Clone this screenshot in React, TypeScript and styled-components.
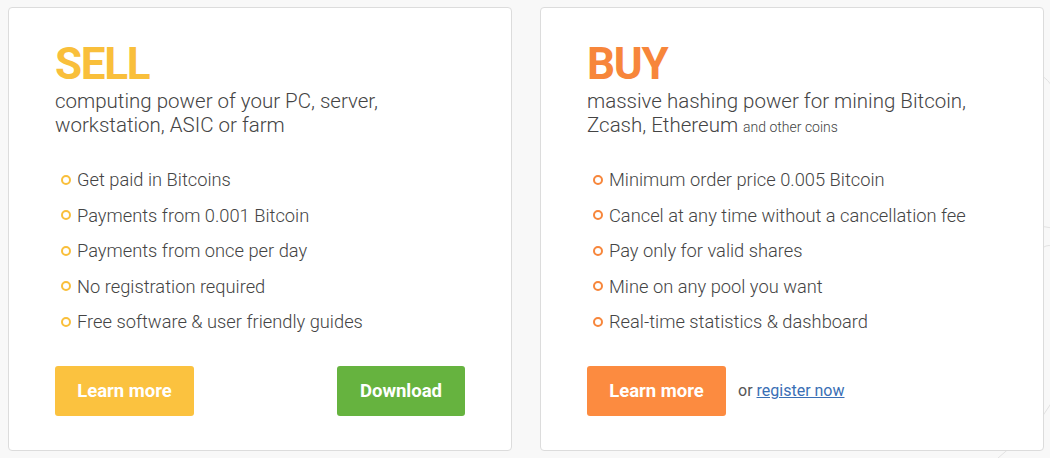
import React from 'react';
import styled, { createGlobalStyle } from 'styled-components';

const GlobalStyle = createGlobalStyle`
  html, body {
    margin: 0;
    padding: 0;
    background: #f8f8f8;
    font-family: Roboto, "Liberation Sans", Arial, sans-serif;
    color: #444;
  }
`;

const Page = styled.div`
  position: relative;
  width: 1050px;
  height: 458px;
  overflow: hidden;
  box-sizing: border-box;
  padding: 7px 0 0 8px;
  display: flex;
  gap: 28px;
`;

// faint network lines behind the cards
const Backdrop = styled.svg`
  position: absolute;
  inset: 0;
  pointer-events: none;
`;

const Card = styled.section`
  position: relative;
  width: 504px;
  height: 444px;
  box-sizing: border-box;
  background: #fff;
  border: 1px solid #dcdcdc;
  border-radius: 4px;
  padding: 34px 46px 0 46px;
  display: flex;
  flex-direction: column;
`;

const Heading = styled.h2<{ $color: string }>`
  margin: 0;
  font-size: 44px;
  line-height: 44px;
  font-weight: 700;
  letter-spacing: -1.3px;
  color: ${(p) => p.$color};
`;

const Lead = styled.p`
  margin: 3px 0 0 0;
  font-size: 20.5px;
  line-height: 24px;
  font-weight: 300;
  color: #444;

  small {
    font-size: 14px;
    line-height: 0;
  }
`;

const Features = styled.ul`
  list-style: none;
  margin: 25px 0 0 0;
  padding: 0;
`;

const Feature = styled.li<{ $color: string }>`
  display: flex;
  align-items: center;
  height: 35.5px;
  font-size: 18.3px;
  font-weight: 300;
  color: #444;

  &::before {
    content: '';
    flex: none;
    width: 6px;
    height: 6px;
    margin: 0 6px 0 6px;
    border: 2.5px solid ${(p) => p.$color};
    border-radius: 50%;
  }
`;

const Actions = styled.div<{ $spread?: boolean }>`
  margin-top: 26px;
  display: flex;
  align-items: center;
  justify-content: ${(p) => (p.$spread ? 'space-between' : 'flex-start')};
`;

const Button = styled.a<{ $bg: string; $width: number }>`
  display: flex;
  align-items: center;
  justify-content: center;
  width: ${(p) => p.$width}px;
  height: 50px;
  box-sizing: border-box;
  border-radius: 3px;
  background: ${(p) => p.$bg};
  color: #fff;
  font-size: 18.5px;
  font-weight: 700;
  text-decoration: none;
  cursor: pointer;
`;

const Alt = styled.span`
  margin-left: 12px;
  font-size: 16px;
  color: #555;

  a {
    color: #3a6fb5;
    text-decoration: underline;
  }
`;

const sellItems = [
  'Get paid in Bitcoins',
  'Payments from 0.001 Bitcoin',
  'Payments from once per day',
  'No registration required',
  'Free software & user friendly guides',
];

const buyItems = [
  'Minimum order price 0.005 Bitcoin',
  'Cancel at any time without a cancellation fee',
  'Pay only for valid shares',
  'Mine on any pool you want',
  'Real-time statistics & dashboard',
];

const YELLOW = '#f9bf3b';
const ORANGE = '#f7863b';

export default function App() {
  return (
    <>
      <GlobalStyle />
      <Page>
        <Backdrop width="1050" height="458" viewBox="0 0 1050 458">
          <g fill="none" stroke="#e2e2e2" strokeWidth="1">
            <path d="M1030 70 Q1044 74 1052 86" />
            <path d="M1040 226 L1052 228" />
            <path d="M1040 250 Q1046 244 1052 246" />
            <path d="M1052 402 L1040 420" />
            <path d="M1012 446 L998 458" />
          </g>
        </Backdrop>

        <Card>
          <Heading $color={YELLOW}>SELL</Heading>
          <Lead>
            computing power of your PC, server,
            <br />
            workstation, ASIC or farm
          </Lead>
          <Features>
            {sellItems.map((t) => (
              <Feature key={t} $color={YELLOW}>
                {t}
              </Feature>
            ))}
          </Features>
          <Actions $spread>
            <Button $bg="#fbc23f" $width={139}>
              Learn more
            </Button>
            <Button $bg="#66b33f" $width={128}>
              Download
            </Button>
          </Actions>
        </Card>

        <Card>
          <Heading $color={ORANGE}>BUY</Heading>
          <Lead>
            massive hashing power for mining Bitcoin,
            <br />
            Zcash, Ethereum <small>and other coins</small>
          </Lead>
          <Features>
            {buyItems.map((t) => (
              <Feature key={t} $color={ORANGE}>
                {t}
              </Feature>
            ))}
          </Features>
          <Actions>
            <Button $bg="#fc8b40" $width={139}>
              Learn more
            </Button>
            <Alt>
              or <a href="#">register now</a>
            </Alt>
          </Actions>
        </Card>
      </Page>
    </>
  );
}
